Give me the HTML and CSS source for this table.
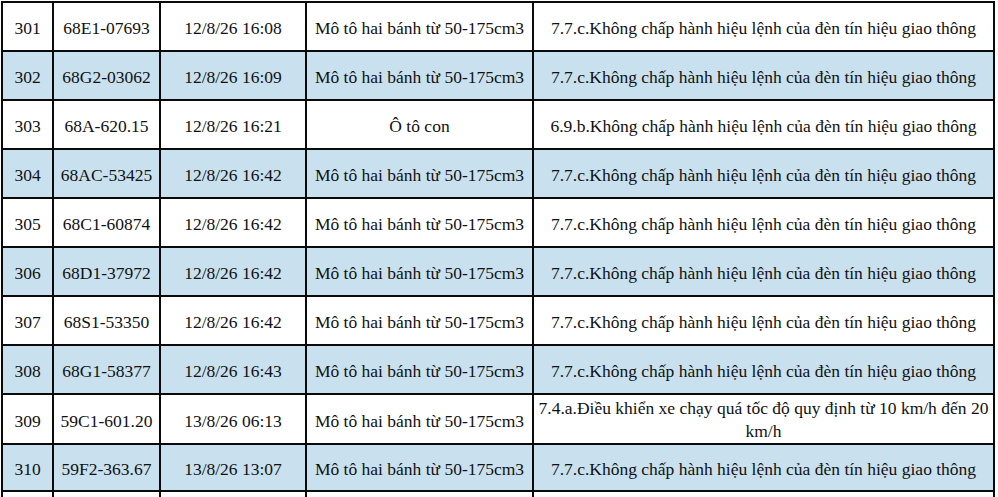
FILE: index.html
```html
<!DOCTYPE html>
<html lang="vi">
<head>
<meta charset="utf-8">
<title>Danh sách vi phạm</title>
<link rel="stylesheet" href="styles.css">
</head>
<body>
<table class="grid">
  <colgroup>
    <col class="c-stt">
    <col class="c-plate">
    <col class="c-time">
    <col class="c-type">
    <col class="c-error">
  </colgroup>
  <tbody>
    <tr class="row"><td>301</td><td>68E1-07693</td><td>12/8/26 16:08</td><td>Mô tô hai bánh từ 50-175cm3</td><td>7.7.c.Không chấp hành hiệu lệnh của đèn tín hiệu giao thông</td></tr>
    <tr class="row alt"><td>302</td><td>68G2-03062</td><td>12/8/26 16:09</td><td>Mô tô hai bánh từ 50-175cm3</td><td>7.7.c.Không chấp hành hiệu lệnh của đèn tín hiệu giao thông</td></tr>
    <tr class="row"><td>303</td><td>68A-620.15</td><td>12/8/26 16:21</td><td>Ô tô con</td><td>6.9.b.Không chấp hành hiệu lệnh của đèn tín hiệu giao thông</td></tr>
    <tr class="row alt"><td>304</td><td>68AC-53425</td><td>12/8/26 16:42</td><td>Mô tô hai bánh từ 50-175cm3</td><td>7.7.c.Không chấp hành hiệu lệnh của đèn tín hiệu giao thông</td></tr>
    <tr class="row"><td>305</td><td>68C1-60874</td><td>12/8/26 16:42</td><td>Mô tô hai bánh từ 50-175cm3</td><td>7.7.c.Không chấp hành hiệu lệnh của đèn tín hiệu giao thông</td></tr>
    <tr class="row alt"><td>306</td><td>68D1-37972</td><td>12/8/26 16:42</td><td>Mô tô hai bánh từ 50-175cm3</td><td>7.7.c.Không chấp hành hiệu lệnh của đèn tín hiệu giao thông</td></tr>
    <tr class="row"><td>307</td><td>68S1-53350</td><td>12/8/26 16:42</td><td>Mô tô hai bánh từ 50-175cm3</td><td>7.7.c.Không chấp hành hiệu lệnh của đèn tín hiệu giao thông</td></tr>
    <tr class="row alt"><td>308</td><td>68G1-58377</td><td>12/8/26 16:43</td><td>Mô tô hai bánh từ 50-175cm3</td><td>7.7.c.Không chấp hành hiệu lệnh của đèn tín hiệu giao thông</td></tr>
    <tr class="row tall"><td>309</td><td>59C1-601.20</td><td>13/8/26 06:13</td><td>Mô tô hai bánh từ 50-175cm3</td><td class="wrap"><div class="wrap-box">7.4.a.Điều khiển xe chạy quá tốc độ quy định từ 10 km/h đến 20<br>km/h</div></td></tr>
    <tr class="row alt short"><td>310</td><td>59F2-363.67</td><td>13/8/26 13:07</td><td>Mô tô hai bánh từ 50-175cm3</td><td>7.7.c.Không chấp hành hiệu lệnh của đèn tín hiệu giao thông</td></tr>
    <tr class="row"><td></td><td></td><td></td><td></td><td></td></tr>
  </tbody>
</table>
</body>
</html>
```

FILE: styles.css
```css
html, body {
  margin: 0;
  padding: 0;
  background: #ffffff;
  overflow: hidden;
  height: 497px;
}

body {
  font-family: "Liberation Serif", "Times New Roman", serif;
  font-size: 17.5px;
  color: #111111;
}

.grid {
  border-collapse: collapse;
  table-layout: fixed;
  width: 992px;
  margin: 1px 0 0 1px;
}

.c-stt { width: 51px; }
.c-plate { width: 107px; }
.c-time { width: 146px; }
.c-type { width: 227px; }
.c-error { width: 461px; }

.grid td {
  border: 2px solid #0a0a0a;
  height: 49px;
  padding: 3px 1px 0;
  text-align: center;
  vertical-align: middle;
  white-space: nowrap;
  line-height: 20px;
  box-sizing: border-box;
}

.row.alt td {
  background: #c9e1ef;
}

.row.tall td {
  height: 50px;
}

.row.short td {
  height: 47px;
}

.grid td.wrap {
  vertical-align: top;
  padding: 2px 0 0;
}

.wrap-box {
  height: 44px;
  line-height: 23px;
}
```
